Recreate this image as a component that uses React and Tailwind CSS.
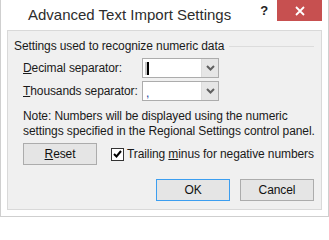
import React from "react";

function Combo({ value, selected }) {
  return (
    <div className="flex h-[20px] w-[77px] border border-[#acacac] bg-white">
      <div className="flex flex-1 items-center pl-[2px]">
        {selected ? (
          <span className="flex h-[13px] items-center">
            <span className="h-[13px] w-[2px] bg-[#c8c8c8]" />
            <span className="h-[13px] w-[2px] bg-black" />
          </span>
        ) : (
          <span className="pl-[1px] pt-[4px] text-[12px] leading-[16px] text-[#2040a0]">{value}</span>
        )}
      </div>
      <div className="flex w-[17px] items-center justify-center border-l border-[#dcdcdc] bg-[#e6e6e6]">
        <svg width="9" height="6" viewBox="0 0 9 6">
          <path d="M1 1 L4.5 4.5 L8 1" fill="none" stroke="#606060" strokeWidth="2" />
        </svg>
      </div>
    </div>
  );
}

function Button({ children, primary }) {
  return (
    <div
      className={`flex h-[22px] w-[74px] items-center justify-center border bg-[#e5e5e5] text-[12px] text-[#111] ${
        primary ? "border-[#3c9ef0]" : "border-[#acacac]"
      }`}
    >
      {children}
    </div>
  );
}

export default function App() {
  return (
    <div className="flex h-[217px] w-[329px] flex-col whitespace-nowrap border-x border-b border-[#cfcfcf] bg-white font-['Liberation_Sans','Noto_Sans',sans-serif] text-[12px] tracking-[-0.1px] text-[#1a1a1a]">
      {/* Title bar */}
      <div className="flex h-[30px] items-start">
        <div className="pl-[27px] pt-[5px] text-[15px] leading-[20px] tracking-normal text-[#2d2d2d]">
          Advanced Text Import Settings
        </div>
        <div className="ml-auto flex items-start">
          <span className="mr-[9px] pt-[3px] text-[13px] font-bold leading-[16px] text-[#222]">?</span>
          <div className="mr-[6px] flex h-[21px] w-[45px] items-center justify-center bg-[#c75050]">
            <svg width="10" height="10" viewBox="0 0 10 10">
              <path d="M1 1 L9 9 M9 1 L1 9" stroke="#fff" strokeWidth="1.8" />
            </svg>
          </div>
        </div>
      </div>

      {/* Body */}
      <div className="mx-[6px] mb-[6px] flex flex-1 flex-col border border-[#d9d9d9] bg-[#f0f0f0] px-[6px] pt-[7px]">
        <div className="flex items-center leading-[16px]">
          <span>Settings used to recognize numeric data</span>
          <div className="ml-[5px] mr-[1px] h-px flex-1 bg-[#dcdcdc]" />
        </div>

        <div className="mt-[4px] flex flex-col gap-[3px] pl-[9px]">
          <div className="flex items-center">
            <span className="w-[119px]">
              <span className="underline">D</span>ecimal separator:
            </span>
            <Combo value="." selected />
          </div>
          <div className="flex items-center">
            <span className="w-[119px]">
              <span className="underline">T</span>housands separator:
            </span>
            <Combo value="," />
          </div>
        </div>

        <p className="mt-[8px] pl-[9px] leading-[15px]">
          Note: Numbers will be displayed using the numeric
          <br />
          settings specified in the Regional Settings control panel.
        </p>

        <div className="mt-[4px] flex items-center pl-[9px]">
          <Button>
            <span className="underline">R</span>eset
          </Button>
          <div className="ml-[14px] flex items-center">
            <div className="flex h-[13px] w-[13px] items-center justify-center border border-[#333] bg-white">
              <svg width="9" height="8" viewBox="0 0 9 8">
                <path d="M1 4 L3.5 6.5 L8 1" fill="none" stroke="#000" strokeWidth="2" />
              </svg>
            </div>
            <span className="ml-[3px]">
              Trailing <span className="underline">m</span>inus for negative numbers
            </span>
          </div>
        </div>

        <div className="mt-[14px] flex justify-end gap-[10px] pr-[1px]">
          <Button primary>OK</Button>
          <Button>Cancel</Button>
        </div>
      </div>
    </div>
  );
}
